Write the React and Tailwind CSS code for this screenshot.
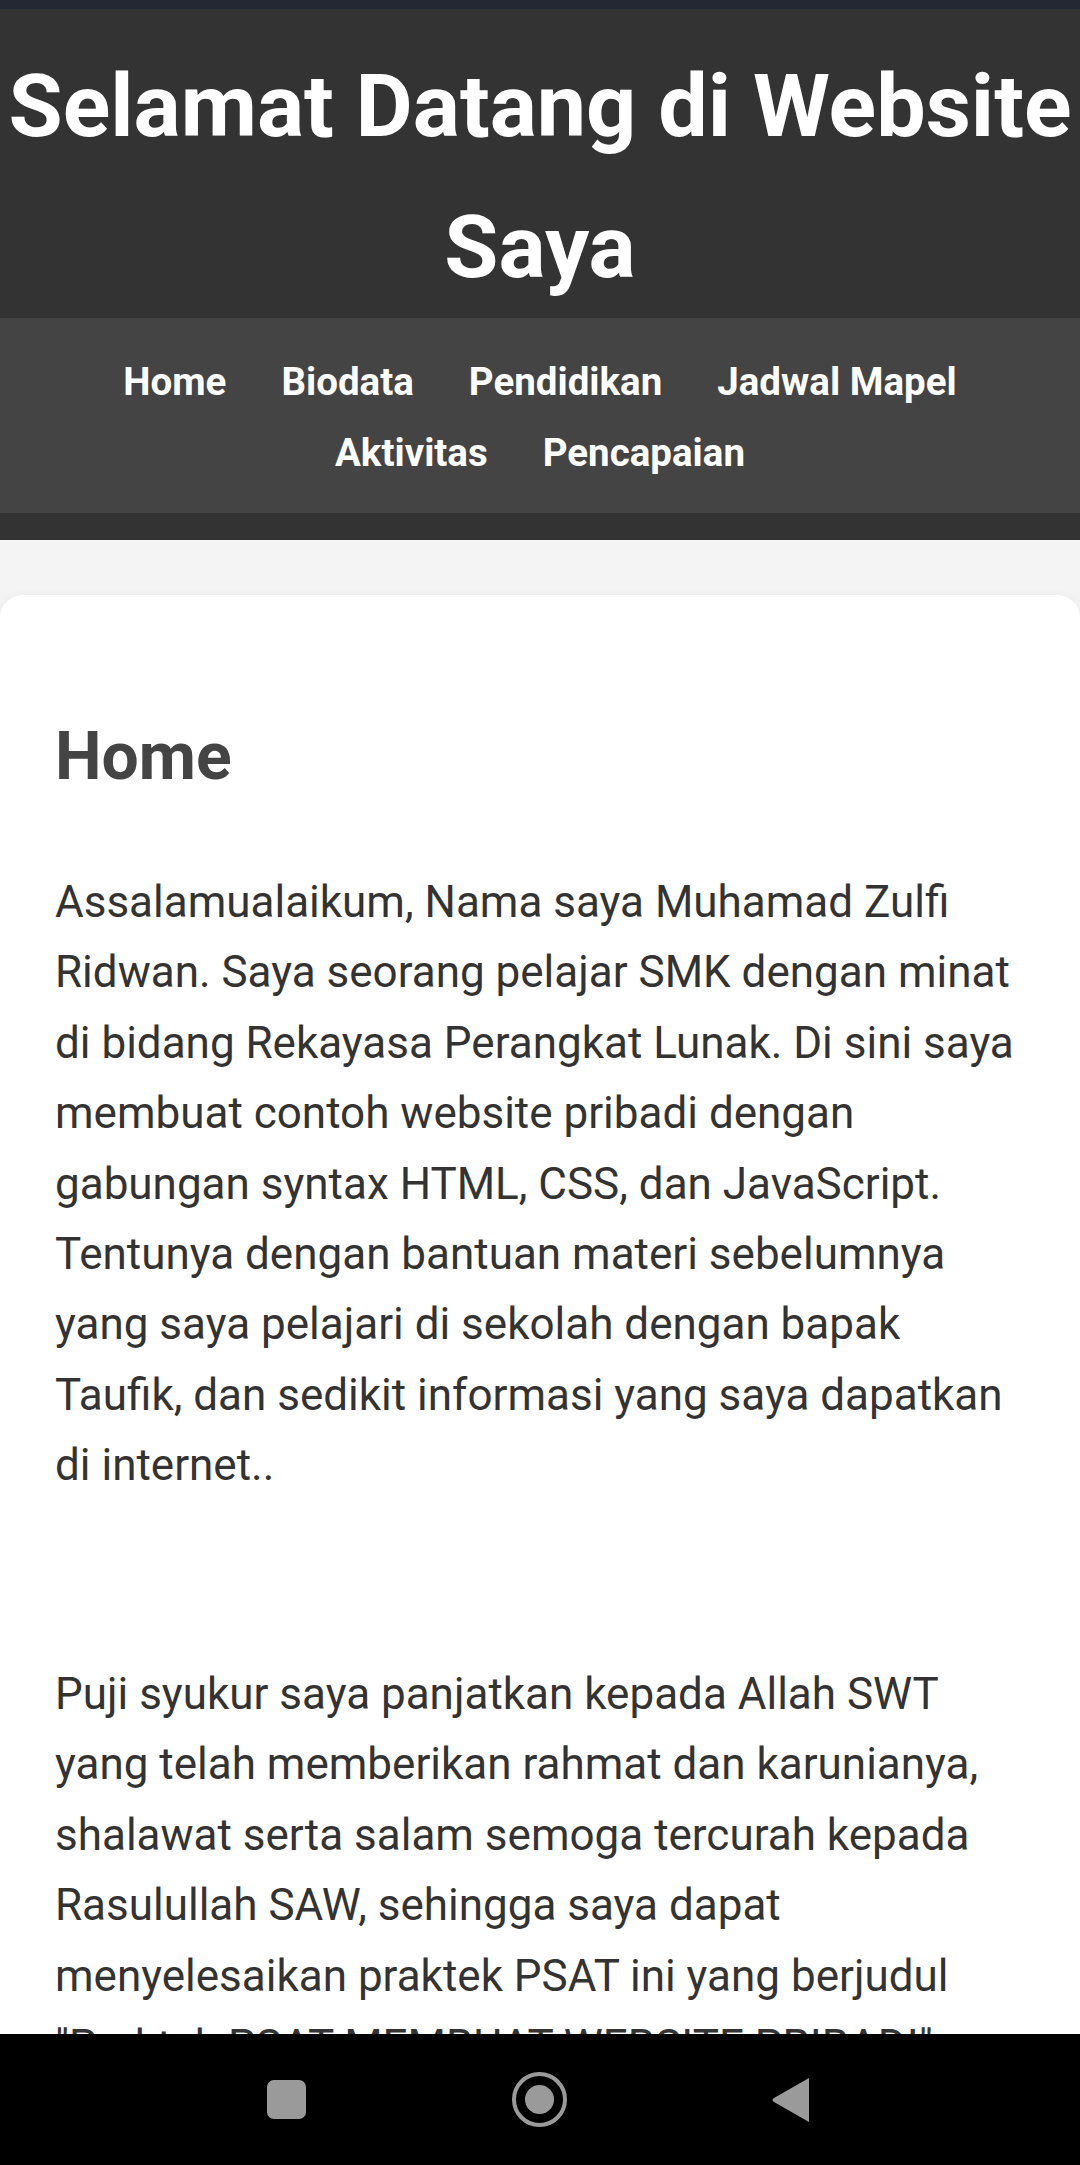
export default function App() {
  const links = ["Home", "Biodata", "Pendidikan", "Jadwal Mapel", "Aktivitas", "Pencapaian"];

  return (
    <div className="relative h-[2165px] overflow-hidden bg-[#f4f4f4] font-['Roboto',sans-serif] text-[#333]">
      <div className="h-[9px] bg-[#232833]" />

      <header className="bg-[#333] pt-[27px] pb-[27px]">
        <h1 className="text-center text-[88px] font-bold leading-[140.8px] text-white">
          Selamat Datang di Website Saya
        </h1>
        <nav className="bg-[#444] py-[27.5px] text-center text-[44px] leading-[70.4px]">
          {links.map((l) => (
            <a
              key={l}
              href="#"
              className="mx-[27.5px] inline-block whitespace-nowrap text-[38.5px] font-bold leading-none text-white"
            >
              {l}
            </a>
          ))}
        </nav>
      </header>

      <main className="pt-[55px]">
        <section className="rounded-[22px] bg-white px-[55px] pt-[55px] pb-[55px] shadow-[0_2px_10px_rgba(0,0,0,0.08)]">
          <h2 className="mt-[54px] mb-[57px] text-[66px] font-bold leading-[105.6px] text-[#444]">
            Home
          </h2>
          <p className="text-[44px] leading-[70.4px]">
            Assalamualaikum, Nama saya Muhamad Zulfi Ridwan. Saya seorang pelajar SMK dengan minat di bidang
            Rekayasa Perangkat Lunak. Di sini saya membuat contoh website pribadi dengan gabungan syntax HTML,
            CSS, dan JavaScript. Tentunya dengan bantuan materi sebelumnya yang saya pelajari di sekolah dengan
            bapak Taufik, dan sedikit informasi yang saya dapatkan di internet..
          </p>
          <p className="mt-[158.4px] text-[44px] leading-[70.4px]">
            Puji syukur saya panjatkan kepada Allah SWT yang telah memberikan rahmat dan karunianya, shalawat
            serta salam semoga tercurah kepada Rasulullah SAW, sehingga saya dapat menyelesaikan praktek PSAT
            ini yang berjudul "Praktek PSAT MEMBUAT WEBSITE PRIBADI". Semoga website ini dapat bermanfaat bagi
            saya dan bagi siapa saja yang membacanya.
          </p>
        </section>
      </main>

      <div className="absolute bottom-0 left-0 flex h-[131px] w-full items-center bg-black">
        <div className="flex w-full items-center">
          <div className="ml-[267px] h-[39px] w-[39px] rounded-[7px] bg-[#9a9a9a]" />
          <div className="ml-[206px] flex h-[55px] w-[55px] items-center justify-center rounded-full border-[4px] border-[#9a9a9a]">
            <div className="h-[29px] w-[29px] rounded-full bg-[#9a9a9a]" />
          </div>
          <svg className="ml-[204px]" width="40" height="46" viewBox="0 0 40 46">
            <path d="M38 1 L38 45 L3 25 Q0 23 3 21 Z" fill="#9a9a9a" />
          </svg>
        </div>
      </div>
    </div>
  );
}
